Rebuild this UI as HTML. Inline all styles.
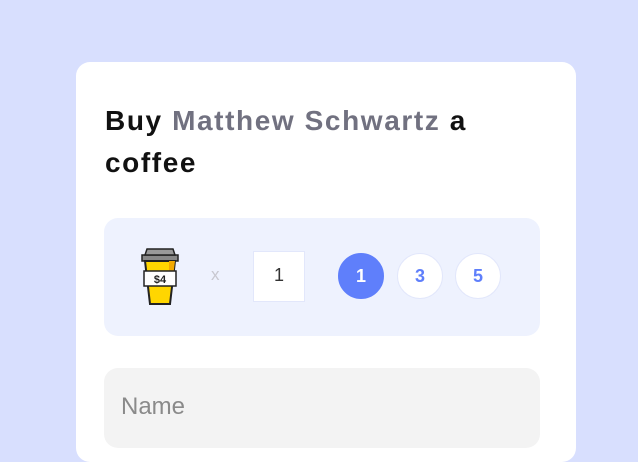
<!DOCTYPE html>
<html><head><style>
html,body{margin:0;width:638px;height:408px;overflow:hidden;background:#d8dffe;font-family:"Liberation Sans",sans-serif;}
.card{position:absolute;left:76px;top:62px;width:500px;height:400px;background:#fff;border-radius:14px;}
h1{position:absolute;left:29px;top:38px;margin:0;font-size:28px;line-height:42px;font-weight:bold;color:#111;letter-spacing:1.6px;width:420px}
h1 span{color:#717180}
.box{position:absolute;left:28px;top:156px;width:436px;height:118px;background:#eef2fe;border-radius:14px;}
.x{position:absolute;left:107px;top:47px;color:#c8c8d0;font-size:17px}
.inp{position:absolute;left:149px;top:33px;width:50px;height:49px;background:#fff;border:1px solid #e2e7fb;text-align:center;line-height:47px;font-size:18px;color:#333}
.c{position:absolute;top:35px;width:44px;height:44px;border-radius:50%;background:#fff;border:1px solid #e2e7fb;text-align:center;line-height:44px;color:#5f7ffb;font-weight:bold;font-size:18px}
.name{position:absolute;left:28px;top:306px;width:436px;height:80px;background:#f3f3f3;border-radius:14px;}
.name div{position:absolute;left:17px;top:25px;font-size:24px;color:#8a8a8a}
</style></head><body>
<div class="card">
<h1>Buy <span>Matthew Schwartz</span> a coffee</h1>
<div class="box">
<svg style="position:absolute;left:35px;top:29px" width="42" height="60" viewBox="0 0 42 60">
<path d="M3 8 L39 8 L39 14 L3 14 Z" fill="#888" stroke="#222" stroke-width="1.5"/>
<path d="M8 2 L34 2 L36 8 L6 8 Z" fill="#999" stroke="#222" stroke-width="1.5"/>
<path d="M6 14 L36 14 L31 57 L11 57 Z" fill="#ffd600" stroke="#222" stroke-width="2"/>
<path d="M30 14 L36 14 L34 30 L30 30 Z" fill="#f2a900"/>
<rect x="5" y="24" width="32" height="15" fill="#fff" stroke="#222" stroke-width="1.5"/>
<text x="21" y="36" font-size="11" font-weight="bold" text-anchor="middle" font-family="Liberation Sans" fill="#222">$4</text>
</svg>
<div class="x">x</div>
<div class="inp">1</div>
<div class="c" style="left:234px;background:#5f7ffb;border-color:#5f7ffb;color:#fff">1</div>
<div class="c" style="left:293px">3</div>
<div class="c" style="left:351px">5</div>
</div>
<div class="name"><div>Name</div></div>
</div>
</body></html>
